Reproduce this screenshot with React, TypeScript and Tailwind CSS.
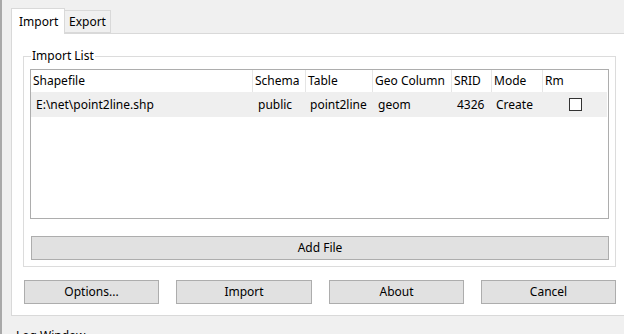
import React, { useState } from "react";

type Row = {
  file: string;
  schema: string;
  table: string;
  geo: string;
  srid: string;
  mode: string;
  rm: boolean;
};

const columns = [
  { label: "Shapefile", w: "w-[222px]" },
  { label: "Schema", w: "w-[53px]" },
  { label: "Table", w: "w-[67px]" },
  { label: "Geo Column", w: "w-[79px]" },
  { label: "SRID", w: "w-[40px]" },
  { label: "Mode", w: "w-[51px]" },
  { label: "Rm", w: "w-[64px]" },
];

const rows: Row[] = [
  { file: "E:\\net\\point2line.shp", schema: "public", table: "point2line", geo: "geom", srid: "4326", mode: "Create", rm: false },
];

const Button: React.FC<{ label: string; className?: string }> = ({ label, className }) => (
  <button className={`h-[24px] bg-[#e1e1e1] border border-[#adadad] text-[12px] text-black leading-none ${className ?? ""}`}>
    {label}
  </button>
);

export default function App() {
  const [tab, setTab] = useState("import");

  return (
    <div
      className="w-[624px] h-[334px] overflow-hidden bg-[#f0f0f0] border-l-2 border-[#a9a9a9] text-black"
      style={{ fontFamily: '"Noto Sans", "Noto Sans CJK SC", sans-serif' }}
    >
      <div className="pl-[9px] pt-[8px]">
        {/* Tabs */}
        <div className="flex items-end h-[25px]">
          <button
            onClick={() => setTab("import")}
            className="relative z-10 h-[26px] w-[54px] -mb-px bg-white border border-b-0 border-[#d9d9d9] text-[12px] pl-[7px] text-left"
          >
            Import
          </button>
          <button
            onClick={() => setTab("export")}
            className="h-[23px] w-[46px] bg-[#f0f0f0] border border-l-0 border-[#d9d9d9] text-[12px] pl-[4px] text-left"
          >
            Export
          </button>
        </div>

        {/* Pane */}
        <div className="h-[283px] w-[640px] bg-white border border-[#d9d9d9] pt-[15px] pl-[11px]">
          {/* Group box */}
          <fieldset className="w-[593px] h-[218px] border border-[#dcdcdc] px-[6px] pt-[6px] m-0 min-w-0">
            <legend className="ml-[1px] px-[1px] text-[12px] leading-[14px]">Import List</legend>

            <div className="h-[150px] border border-[#adadad] bg-white text-[12px]">
              <div className="flex h-[22px] items-center">
                {columns.map((c, i) => (
                  <div
                    key={c.label}
                    className={`${c.w} h-full flex items-center pl-[2px] ${i < columns.length - 1 ? "border-r border-[#e5e5e5]" : ""}`}
                  >
                    {c.label}
                  </div>
                ))}
              </div>
              {rows.map(r => (
                <div key={r.file} className="flex h-[25px] items-center bg-[#efefef] w-[576px]">
                  <div className="w-[222px] pl-[5px]">{r.file}</div>
                  <div className="w-[53px] pl-[5px]">{r.schema}</div>
                  <div className="w-[67px] pl-[4px]">{r.table}</div>
                  <div className="w-[79px] pl-[5px]">{r.geo}</div>
                  <div className="w-[40px] pl-[5px]">{r.srid}</div>
                  <div className="w-[51px] pl-[4px]">{r.mode}</div>
                  <div className="w-[64px] flex justify-center">
                    <span className="block w-[13px] h-[13px] border border-[#333333] bg-white" />
                  </div>
                </div>
              ))}
            </div>

            <Button label="Add File" className="mt-[17px] ml-px w-[578px] block" />
          </fieldset>

          {/* Bottom buttons */}
          <div className="flex mt-[13px] ml-px">
            <Button label="Options..." className="w-[135px]" />
            <Button label="Import" className="w-[136px] ml-[17px]" />
            <Button label="About" className="w-[135px] ml-[17px]" />
            <Button label="Cancel" className="w-[135px] ml-[17px]" />
          </div>
        </div>
      </div>

      <div className="pl-[14px] pt-[14px] text-[12px] leading-none">Log Window</div>
    </div>
  );
}
